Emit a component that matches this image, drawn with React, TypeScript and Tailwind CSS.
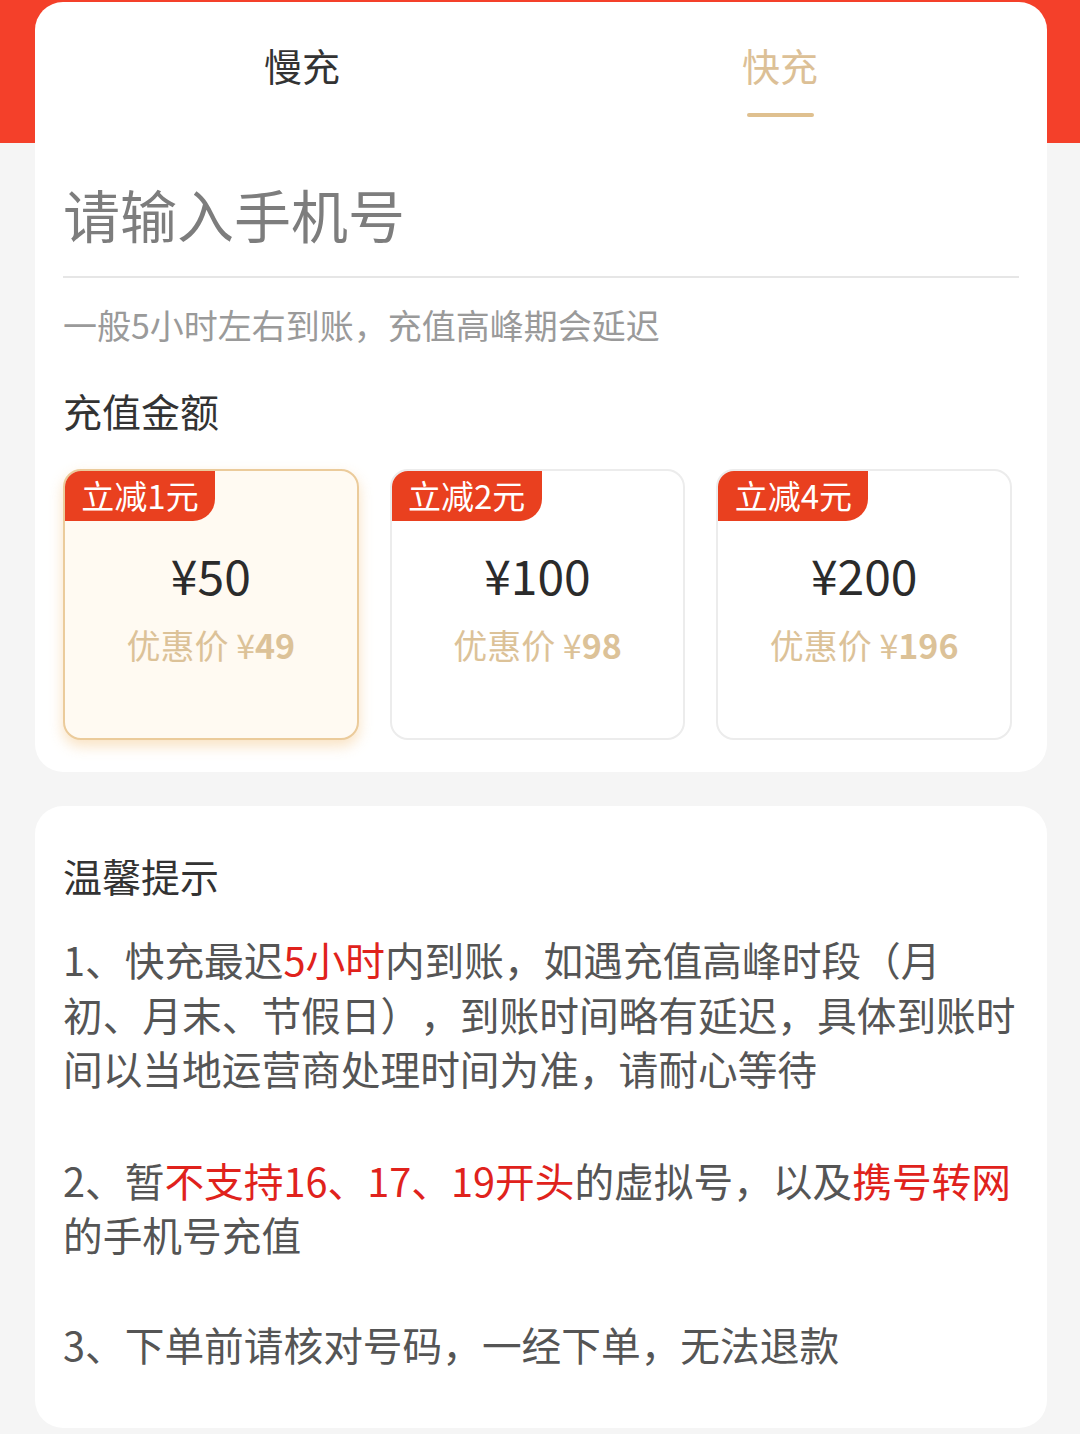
import React from "react";

const amounts = [
  { off: "立减1元", face: "¥50", price: "49", active: true },
  { off: "立减2元", face: "¥100", price: "98", active: false },
  { off: "立减4元", face: "¥200", price: "196", active: false },
];

function AmountCard({ off, face, price, active }: { off: string; face: string; price: string; active: boolean }) {
  return (
    <div
      className={
        active
          ? "relative h-[271px] rounded-[18px] border-2 border-[#ebcb9b] bg-[#fffaf2] shadow-[0_6px_14px_rgba(242,190,120,0.45)]"
          : "relative h-[271px] rounded-[18px] border-2 border-[#ececec] bg-white"
      }
    >
      <div className="absolute left-0 top-0 flex h-[50px] w-[150px] items-center justify-center rounded-tl-[16px] rounded-br-[22px] bg-[#e9401f] pb-[2px] text-[33px] leading-none text-white">
        {off}
      </div>
      <div className="flex flex-col items-center pt-[75px]">
        <div className="text-[48px] leading-[56px] text-[#2b2b2b]">{face}</div>
        <div className="mt-[21px] text-[34px] leading-[44px] text-[#dcc298]">
          优惠价 ¥<span className="font-bold">{price}</span>
        </div>
      </div>
    </div>
  );
}

export default function App() {
  return (
    <div className="h-[1434px] w-[1080px] overflow-hidden bg-[linear-gradient(to_bottom,#f4402a_0px,#f4402a_143px,#f5f5f5_143px)] pt-[2px] font-['Noto_Sans_CJK_SC',sans-serif] [text-spacing-trim:space-all]">
      {/* main card */}
      <div className="ml-[35px] w-[1012px] rounded-[28px] bg-white px-[28px] pb-[32px]">
        {/* tabs */}
        <div className="flex h-[115px]">
          <div className="flex flex-1 flex-col items-center pt-[39px]">
            <div className="text-[38px] leading-[48px] text-[#333333]">慢充</div>
            <div className="mt-[24px] h-[4px] w-[67px] rounded-full bg-transparent" />
          </div>
          <div className="flex flex-1 flex-col items-center pt-[39px]">
            <div className="text-[38px] leading-[48px] text-[#dcc096]">快充</div>
            <div className="mt-[24px] h-[4px] w-[67px] rounded-full bg-[#dfc08f]" />
          </div>
        </div>
        {/* phone input */}
        <div className="h-[161px] border-b-2 border-[#e6e6e6] pt-[63px]">
          <div className="text-[57px] leading-[66px] text-[#7d7d7d]">请输入手机号</div>
        </div>
        <div className="mt-[27px] text-[34px] leading-[40px] text-[#9a9a9a]">一般5小时左右到账，充值高峰期会延迟</div>
        <div className="mt-[39px] text-[39px] leading-[52px] text-[#333333]">充值金额</div>
        <div className="mt-[33px] grid grid-cols-3 gap-[31px] pr-[7px]">
          {amounts.map((a) => (
            <AmountCard key={a.face} {...a} />
          ))}
        </div>
      </div>

      {/* tips card */}
      <div className="ml-[35px] mt-[34px] h-[622px] w-[1012px] rounded-[28px] bg-white px-[28px] pt-[43px]">
        <div className="text-[39px] leading-[52px] text-[#333333]">温馨提示</div>
        <div className="mt-[31px] whitespace-nowrap text-[39.7px] leading-[54.5px] text-[#555555]">
          <div>
            1、快充最迟<span className="text-[#e0221c]">5小时</span>内到账，如遇充值高峰时段（月
          </div>
          <div>初、月末、节假日），到账时间略有延迟，具体到账时</div>
          <div>间以当地运营商处理时间为准，请耐心等待</div>
        </div>
        <div className="mt-[57px] whitespace-nowrap text-[39.7px] leading-[54.5px] text-[#555555]">
          <div>
            2、暂<span className="text-[#e0221c]">不支持16、17、19开头</span>的虚拟号，以及
            <span className="text-[#e0221c]">携号转网</span>
          </div>
          <div>的手机号充值</div>
        </div>
        <div className="mt-[55px] whitespace-nowrap text-[39.7px] leading-[54.5px] text-[#555555]">
          <div>3、下单前请核对号码，一经下单，无法退款</div>
        </div>
      </div>
    </div>
  );
}
